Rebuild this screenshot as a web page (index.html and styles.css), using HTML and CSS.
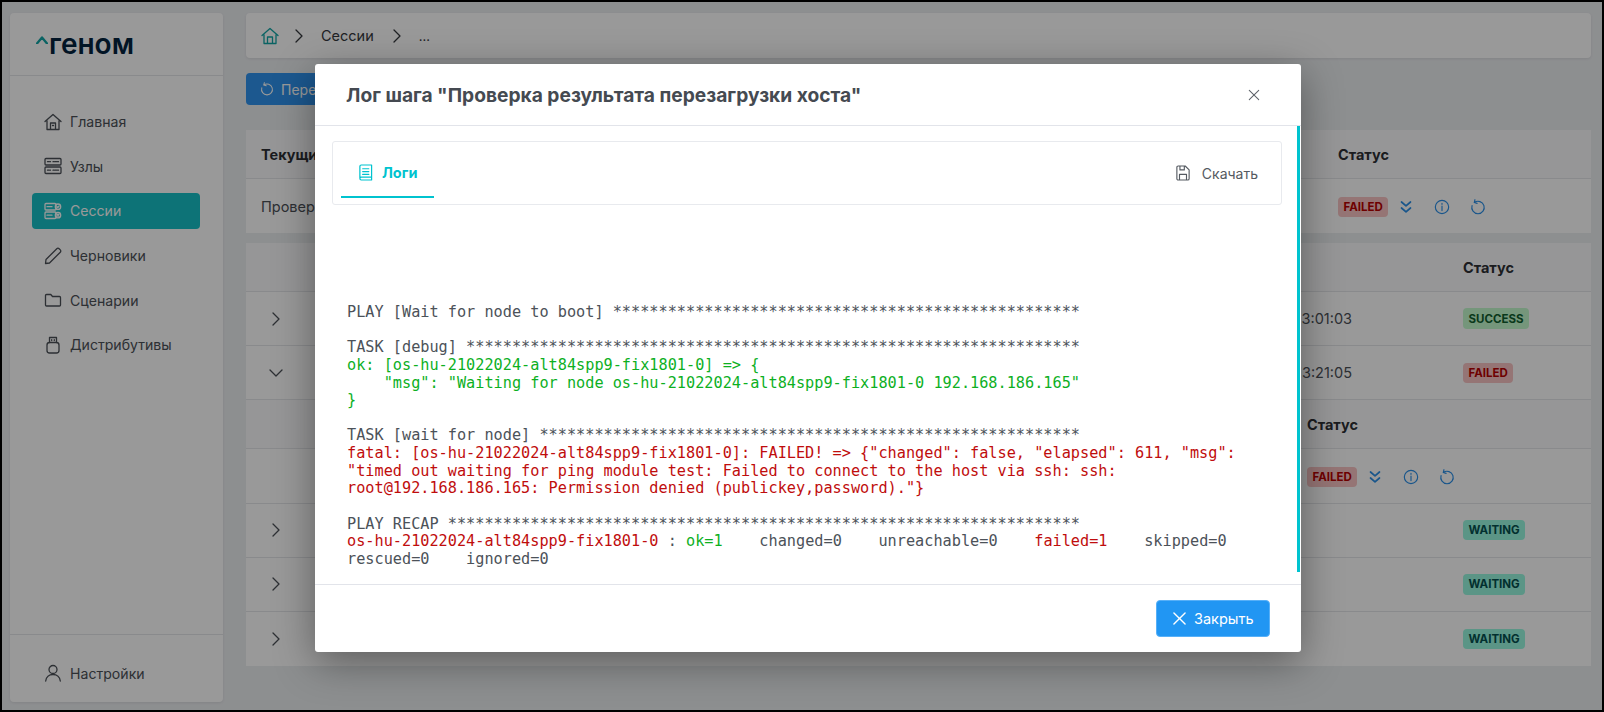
FILE: index.html
```html
<!DOCTYPE html>
<html lang="ru">
<head>
<meta charset="utf-8">
<title>Геном</title>
<link rel="stylesheet" href="styles.css">
</head>
<body>
<div class="frame">
  <aside class="sidebar">
    <div class="logo">
      <svg class="logo-caret" viewBox="0 0 12 8" width="12" height="8"><polyline points="1,7.500 6,1.500 11,7.500" /></svg>
      <span class="logo-text">геном</span>
    </div>
    <nav class="nav">
      <a class="nav-item"><svg class="ico" viewBox="0 0 18 18"><path d="M1 8.500 9 1.500l8 7M3 7.500V16.500h12V7.500M6.500 16.500V10h5v6.500M8.500 12.500h1"/></svg>Главная</a>
      <a class="nav-item"><svg class="ico" viewBox="0 0 18 18"><rect x="1" y="1.500" width="16" height="6.500" rx="1"/><rect x="1" y="10" width="16" height="6.500" rx="1"/><path d="M3.500 4.700h3M9 4.700h5.500M3.500 13.200h3M9 13.200h5.500" stroke-dasharray="1.400 .8"/></svg>Узлы</a>
      <a class="nav-item active"><svg class="ico" viewBox="0 0 18 18"><rect x="1" y="1.500" width="11" height="6.500" rx="1"/><rect x="1" y="10" width="11" height="6.500" rx="1"/><path d="M3 4.700h5M3 13.200h5"/><circle cx="14" cy="4.700" r="2.700"/><circle cx="14" cy="13.200" r="2.700"/><path d="M13 4.700l.8.8 1.300-1.500M13 12.200l2 2M15 12.200l-2 2"/></svg>Сессии</a>
      <a class="nav-item"><svg class="ico" viewBox="0 0 18 18"><path d="M1.500 16.500 2 12.500 12.800 1.700a1.600 1.600 0 0 1 2.300 0l1.200 1.200a1.600 1.600 0 0 1 0 2.300L5.500 16z"/></svg>Черновики</a>
      <a class="nav-item"><svg class="ico" viewBox="0 0 18 18"><path d="M2.500 3.500h4.300l1.700 2h7a1 1 0 0 1 1 1v7.500a1 1 0 0 1-1 1h-13a1 1 0 0 1-1-1V4.500a1 1 0 0 1 1-1z"/></svg>Сценарии</a>
      <a class="nav-item"><svg class="ico" viewBox="0 0 18 18"><rect x="3" y="6.500" width="12" height="10.500" rx="2.500"/><path d="M5.500 6.500V1.500h7v5M7.700 3.700v.8M10.300 3.700v.8"/></svg>Дистрибутивы</a>
    </nav>
    <div class="sidebar-foot">
      <a class="nav-item"><svg class="ico" viewBox="0 0 18 18"><circle cx="9" cy="5.500" r="4"/><path d="M1.700 17c.4-4 3.400-6.500 7.300-6.500s6.900 2.500 7.300 6.500"/></svg>Настройки</a>
    </div>
  </aside>

  <main class="main">
    <div class="crumbs">
      <svg class="ico crumb-home" viewBox="0 0 18 18"><path d="M1 8.500 9 1.500l8 7M3 7.500V16.500h12V7.500M6.500 16.500V10h5v6.500"/></svg>
      <svg class="crumb-sep" viewBox="0 0 8 14"><path d="M1 1l6 6-6 6"/></svg>
      <span>Сессии</span>
      <svg class="crumb-sep" viewBox="0 0 8 14"><path d="M1 1l6 6-6 6"/></svg>
      <span class="crumb-dots">...</span>
    </div>

    <div class="toolbar">
      <button class="btn-restart"><svg class="ico" viewBox="0 0 18 18"><path d="M5 3.800A7 7 0 1 1 2.300 7.500M5.600 .8 4.800 4l3.200 .9"/></svg>Перезапустить</button>
    </div>

    <section class="table">
      <div class="row head one"><span>Текущий шаг</span><span>Статус</span></div>
      <div class="row tall one"><span>Проверка</span>
        <div class="status"><span class="badge failed">FAILED</span>
          <svg class="act act-dbl" viewBox="0 0 14 14"><path d="M2.500 2l4.500 3.800L11.500 2M2.500 8l4.500 3.800L11.500 8"/></svg>
          <svg class="act" viewBox="0 0 18 18"><circle cx="9" cy="9" r="7.500"/><path d="M9 8v5M9 5v1"/></svg>
          <svg class="act" viewBox="0 0 18 18"><path d="M5 3.800A7 7 0 1 1 2.300 7.500M5.600 .8 4.800 4l3.200 .9"/></svg>
        </div>
      </div>
    </section>

    <section class="table second">
      <div class="row head two"><span></span><span></span><span></span><span>Статус</span></div>
      <div class="row tall two"><svg class="chev" viewBox="0 0 8 14"><path d="M1 1l6 6-6 6"/></svg><span></span><span class="time">13:01:03</span><span class="badge success">SUCCESS</span></div>
      <div class="row tall two"><svg class="chev down" viewBox="0 0 14 8"><path d="M1 1l6 6 6-6"/></svg><span></span><span class="time">13:21:05</span><span class="badge failed">FAILED</span></div>
      <div class="row head nested"><span></span><span>Статус</span></div>
      <div class="row tall nested"><span></span>
        <div class="status"><span class="badge failed">FAILED</span>
          <svg class="act act-dbl" viewBox="0 0 14 14"><path d="M2.500 2l4.500 3.800L11.500 2M2.500 8l4.500 3.800L11.500 8"/></svg>
          <svg class="act" viewBox="0 0 18 18"><circle cx="9" cy="9" r="7.500"/><path d="M9 8v5M9 5v1"/></svg>
          <svg class="act" viewBox="0 0 18 18"><path d="M5 3.800A7 7 0 1 1 2.300 7.500M5.600 .8 4.800 4l3.200 .9"/></svg>
        </div>
      </div>
      <div class="row tall two"><svg class="chev" viewBox="0 0 8 14"><path d="M1 1l6 6-6 6"/></svg><span></span><span></span><span class="badge waiting">WAITING</span></div>
      <div class="row tall two"><svg class="chev" viewBox="0 0 8 14"><path d="M1 1l6 6-6 6"/></svg><span></span><span></span><span class="badge waiting">WAITING</span></div>
      <div class="row tall two"><svg class="chev" viewBox="0 0 8 14"><path d="M1 1l6 6-6 6"/></svg><span></span><span></span><span class="badge waiting">WAITING</span></div>
    </section>
  </main>
</div>

<div class="overlay">
  <div class="modal">
    <header class="modal-head">
      <h2>Лог шага "Проверка результата перезагрузки хоста"</h2>
      <svg class="modal-x" viewBox="0 0 14 14"><path d="M1.500 1.500l11 11M12.500 1.500l-11 11"/></svg>
    </header>
    <div class="modal-body">
      <div class="tabs">
        <div class="tab"><svg class="ico" viewBox="0 0 16 18"><path d="M2 14.500V2.500a1.500 1.500 0 0 1 1.500-1.500H14.500v13H3.500a1.500 1.500 0 0 0 0 3H14.500v-3M5 5h6.500M5 8h6.500M5 11h6.500"/></svg>Логи</div>
        <div class="download"><svg class="ico" viewBox="0 0 16 18"><path d="M1 2.500a1.500 1.500 0 0 1 1.500-1.500H10.500L15 5.500V15.500a1.500 1.500 0 0 1-1.500 1.500H2.500A1.500 1.500 0 0 1 1 15.500zM4.500 1v4.500h5V1M4 17v-6.500h8V17"/></svg>Скачать</div>
      </div>
<pre class="log"><span>PLAY [Wait for node to boot] ***************************************************</span>

<span>TASK [debug] *******************************************************************</span>
<span class="ok">ok: [os-hu-21022024-alt84spp9-fix1801-0] =&gt; {
    "msg": "Waiting for node os-hu-21022024-alt84spp9-fix1801-0 192.168.186.165"
}</span>

<span>TASK [wait for node] ***********************************************************</span>
<span class="err">fatal: [os-hu-21022024-alt84spp9-fix1801-0]: FAILED! =&gt; {"changed": false, "elapsed": 611, "msg":
"timed out waiting for ping module test: Failed to connect to the host via ssh: ssh:
root@192.168.186.165: Permission denied (publickey,password)."}</span>

<span>PLAY RECAP *********************************************************************</span>
<span class="err">os-hu-21022024-alt84spp9-fix1801-0</span> : <span class="ok">ok=1</span>    changed=0    unreachable=0    <span class="err">failed=1</span>    skipped=0
rescued=0    ignored=0</pre>
      <div class="scroll-thumb"></div>
    </div>
    <footer class="modal-foot">
      <button class="btn-close"><svg viewBox="0 0 14 14"><path d="M1 1l12 12M13 1L1 13"/></svg>Закрыть</button>
    </footer>
  </div>
</div>
</body>
</html>
```

FILE: styles.css
```css
* { box-sizing: border-box; }
html, body { margin: 0; height: 712px; overflow: hidden; }
body { font-family: Inter, "Noto Sans", sans-serif; font-size: 14px; color: #35383d; background: #000; }

svg { fill: none; stroke: currentColor; stroke-width: 1.3; stroke-linecap: round; stroke-linejoin: round; flex: none; }
.ico { width: 18px; height: 18px; }

.frame { margin: 2px; width: 1600px; height: 708px; background: #eceef1; display: flex; padding: 11px 11px 8px 8px; }

.sidebar { width: 213px; background: #fff; border-radius: 4px; display: flex; flex-direction: column; box-shadow: 0 1px 3px rgba(0,0,0,.08); }
.logo { height: 63px; border-bottom: 1px solid #e4e6ea; padding-left: 26px; display: flex; align-items: center; gap: 1px; }
.logo-caret { color: #12a5a5; stroke-width: 2.300; margin-top: -8px; }
.logo-text { font-size: 28px; font-weight: 600; color: #04233f; line-height: 1; margin-top: 0; }
.nav { flex: 1; padding: 27.500px 23px 0 22px; display: flex; flex-direction: column; gap: 8.700px; }
.nav-item { height: 36px; display: flex; align-items: center; gap: 8px; padding-left: 12px; border-radius: 4px; color: #4b5057; font-size: 14.100px; }
.nav-item.active { background: #16c0c6; color: #fff; }
.sidebar-foot { border-top: 1px solid #e4e6ea; padding: 20px 23px 0 22px; height: 68px; }

.main { flex: 1; margin-left: 23px; display: flex; flex-direction: column; min-width: 0; }
.crumbs { height: 45px; background: #fff; border-radius: 4px; display: flex; align-items: center; padding-left: 15px; font-size: 14.500px; color: #35383d; box-shadow: 0 1px 3px rgba(0,0,0,.08); }
.crumb-home { color: #12a5a5; }
.crumb-sep { width: 8px; height: 14px; margin: 0 18px 0 16px; }
.crumb-sep + span + .crumb-sep { margin-left: 19px; margin-right: 18px; }
.crumb-dots { font-size: 13px; }
.toolbar { margin-top: 15px; height: 32px; }
.btn-restart { height: 32px; width: 200px; border: 0; border-radius: 4px; background: #2f93ee; color: #fff; font: inherit; font-size: 14px; display: flex; align-items: center; gap: 7px; padding-left: 14px; }
.btn-restart .ico { width: 14px; height: 14px; }

.table { margin-top: 25px; background: #fff; }
.table.second { margin-top: 10px; }
.row { display: grid; align-items: center; padding-left: 15px; }
.head { height: 49px; font-weight: 700; font-size: 14.500px; color: #2d3035; background: #fafbfc; border-bottom: 1px solid #e4e6ea; }
.tall { height: 54.170px; font-size: 14.500px; color: #4b5057; border-bottom: 1px solid #e4e6ea; }
.tall:last-child { border-bottom: 0; }
.one { grid-template-columns: 1fr 253px; }
.two { grid-template-columns: 90px 1fr 240px 128px; }
.nested { grid-template-columns: 1fr 284px; }
.time { font-size: 14.500px; text-align: right; padding-right: 111px; white-space: nowrap; }
.chev { width: 8px; height: 14px; color: #4b5057; margin-left: 11px; }
.chev.down { width: 14px; height: 8px; margin-left: 8px; }
.status { display: flex; align-items: center; margin-top: 2px; }
.badge { display: inline-flex; align-items: center; justify-content: center; justify-self: start; height: 20.500px; padding: 0 5.500px; border-radius: 4px; font-size: 11.500px; font-weight: 700; }
.failed { background: #f8c4c4; color: #b80000; }
.success { background: #c4fbce; color: #0f5e2e; }
.waiting { background: #98f8e0; color: #04504f; }
.act { color: #2a8fe8; width: 16px; height: 16px; margin-left: 20px; }
.act-dbl { width: 14px; height: 14px; margin-left: 11px; margin-right: 1px; stroke-width: 1.700; }

.overlay { position: absolute; inset: 2px; background: rgba(0,0,0,.4); }
.modal { position: absolute; left: 313px; top: 62px; width: 986px; height: 588px; background: #fff; border-radius: 3px; box-shadow: 0 10px 40px rgba(0,0,0,.4); display: flex; flex-direction: column; }
.modal-head { height: 62px; flex: none; border-bottom: 1px solid #e2e4ea; display: flex; align-items: center; justify-content: space-between; padding: 0 41px 0 31px; }
.modal-head h2 { margin: 0; font-size: 19.200px; font-weight: 700; color: #454a51; }
.modal-x { width: 12px; height: 12px; color: #5c6168; stroke-width: 1.200; }
.modal-body { position: relative; flex: 1; padding: 15px 19px 0 17px; overflow: hidden; }
.tabs { height: 64px; border: 1px solid #e8eaee; border-radius: 3px; display: flex; align-items: stretch; justify-content: space-between; padding-left: 8px; padding-right: 23px; }
.tab { width: 93px; margin-bottom: 6px; padding-top: 6px; border-bottom: 2px solid #00c3cf; color: #00c3cf; font-weight: 700; font-size: 14.500px; display: flex; align-items: center; gap: 9px; padding-left: 17px; }
.tab .ico { width: 15px; height: 17px; }
.download { display: flex; align-items: center; gap: 12px; color: #555a61; font-size: 14px; }
.download .ico { width: 14px; height: 16px; }
.log { margin: 99px 0 0 15px; font-family: "DejaVu Sans Mono", monospace; font-size: 15.230px; line-height: 17.640px; color: #4c5259; white-space: pre; }
.ok { color: #0db01f; }
.err { color: #bf0d0d; }
.scroll-thumb { position: absolute; right: 1px; top: 0; width: 3px; height: 446px; background: #00c3cf; }
.modal-foot { height: 68px; flex: none; border-top: 1px solid #e2e4ea; display: flex; align-items: center; justify-content: flex-end; padding: 0 31px 0 0; }
.btn-close { width: 114px; height: 37px; border: 1px solid #57b0f8; border-radius: 4px; background: #2196f3; color: #fff; font: inherit; font-size: 14.500px; display: flex; align-items: center; gap: 8px; padding-left: 16px; }
.btn-close svg { width: 13px; height: 13px; stroke-width: 1.500; }
```
